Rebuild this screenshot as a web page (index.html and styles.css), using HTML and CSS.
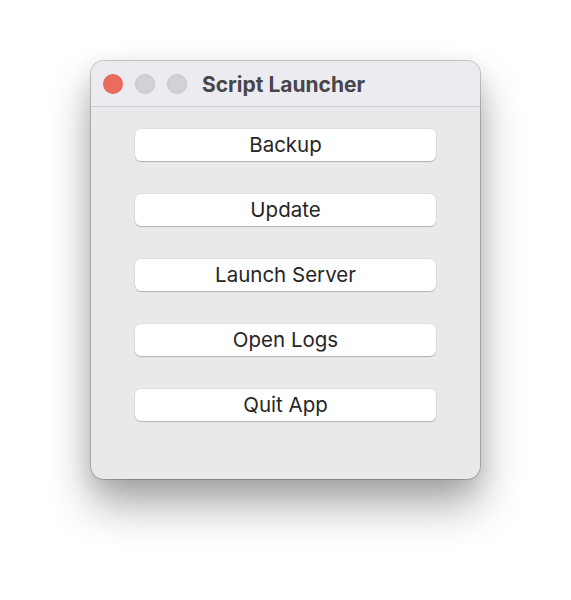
FILE: index.html
```html
<!DOCTYPE html>
<html>
<head>
  <title>Script Launcher</title>
  <link rel="stylesheet" href="styles.css">
</head>
<body>
  <div class="window">
    <div class="titlebar">
      <div class="lights">
        <span class="light close"></span>
        <span class="light"></span>
        <span class="light"></span>
      </div>
      <div class="title">Script Launcher</div>
    </div>
    <div class="content">
      <button class="btn">Backup</button>
      <button class="btn">Update</button>
      <button class="btn">Launch Server</button>
      <button class="btn">Open Logs</button>
      <button class="btn">Quit App</button>
    </div>
  </div>
</body>
</html>
```

FILE: styles.css
```css
body {
  margin: 0;
  min-height: 600px;
  padding-top: 61px;
  box-sizing: border-box;
  background-color: #fff;
  font-family: Inter, "Liberation Sans", sans-serif;
}

.window {
  width: 389px;
  height: 418px;
  margin: 0 auto;
  background-color: #e9e9eb;
  border-radius: 13px;
  box-shadow: 0 0 0 1px rgba(0, 0, 0, 0.2), 0 26px 44px rgba(0, 0, 0, 0.33), 0 8px 24px rgba(0, 0, 0, 0.1);
  overflow: hidden;
  display: flex;
  flex-direction: column;
}

.titlebar {
  height: 45px;
  background-color: #ececf0;
  border-bottom: 1px solid #cfcfd2;
  display: flex;
  align-items: center;
  padding-left: 12px;
}

.lights {
  display: flex;
  gap: 12px;
  margin-right: 15px;
}

.light {
  width: 20px;
  height: 20px;
  border-radius: 50%;
  background-color: #d2d2d6;
  box-shadow: inset 0 0 0 1px rgba(0, 0, 0, 0.06);
}

.light.close {
  background-color: #ed6a5e;
}

.title {
  font-size: 21px;
  font-weight: bold;
  color: #46464b;
  margin-top: 1px;
}

.content {
  display: flex;
  flex-direction: column;
  align-items: center;
  gap: 33px;
  padding-top: 22px;
}

.btn {
  width: 301px;
  height: 32px;
  border: none;
  border-radius: 6px;
  background-color: #fff;
  box-shadow: 0 1px 1px rgba(0, 0, 0, 0.2), 0 0 0 0.5px rgba(0, 0, 0, 0.08);
  font-family: Inter, "Liberation Sans", sans-serif;
  font-size: 20.5px;
  color: #262626;
  padding: 0 0 2px;
}
```
